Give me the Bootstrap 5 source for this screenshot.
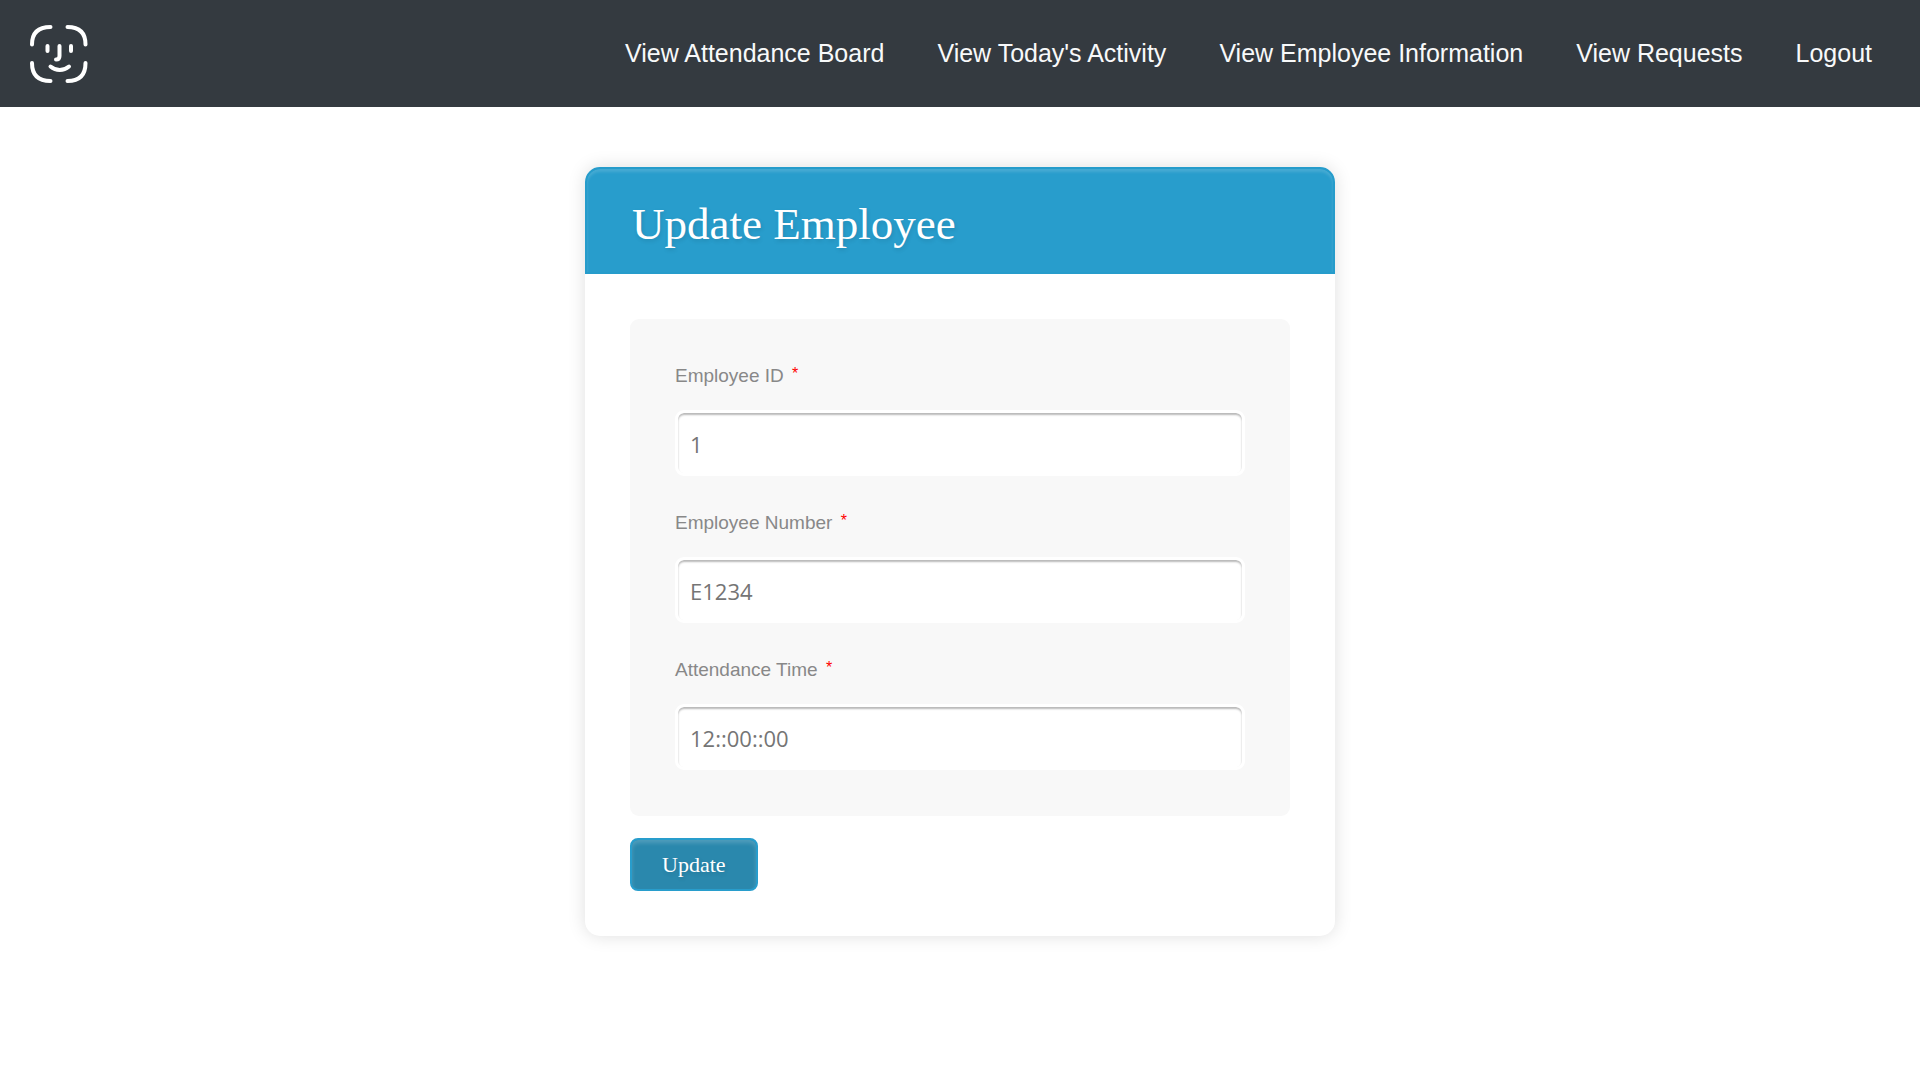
<!DOCTYPE html>
<html lang="en">
<head>
<meta charset="utf-8">
<meta name="viewport" content="width=device-width, initial-scale=1">
<title>Update Employee</title>
<link href="https://cdn.jsdelivr.net/npm/bootstrap@5.3.0/dist/css/bootstrap.min.css" rel="stylesheet">
<style>
  body { background: #fff; font-family: "Liberation Sans", Arial, sans-serif; }
  .site-bar { background: #343a40; padding: 24px; }
  .site-bar .navbar-brand { padding: 0; margin: 0 0 0 4px; }
  .site-bar .navbar-nav { column-gap: 53px; --bs-navbar-nav-link-padding-x: 0; }
  .site-bar .nav-link { color: #f8f9fa; font-size: 25px; line-height: 32px; padding: 0 0 2px; }
  .site-bar .nav-link:hover { color: #ccc; }
  .form-panel { max-width: 750px; margin: 60px auto; border-radius: 15px; box-shadow: 0 0 18px rgba(0, 0, 0, .13); }
  .panel-title {
    margin: 0; padding: 29px 45px 22px; color: #fff; background: #289dcc;
    border: 2px solid #269ccb; border-radius: 15px 15px 0 0;
    font: 400 45px/52px "Liberation Serif", "Times New Roman", serif;
    text-shadow: 1px 2px 4px rgba(0, 0, 0, .12);
    box-shadow: inset 0 3px 3px rgba(255, 255, 255, .14);
  }
  .panel-body { padding: 45px; }
  .field-group { background: #f8f8f8; border-radius: 9px; padding: 45px 45px 46px; margin-bottom: 22px; }
  .field-item + .field-item { margin-top: 35px; }
  .field-group .form-label { display: block; margin: 0 0 23px; color: #888; font-size: 19px; line-height: 23px; }
  .req-star { margin-left: 3px; color: #f00; font-size: 16px; line-height: 16px; vertical-align: 3px; }
  .field-group .form-control {
    height: 66px; padding: 2px 12px 0; border: 3px solid #fff; border-radius: 9px;
    box-shadow: inset 0 2px 2px rgba(0, 0, 0, .28);
    color: #757575; font: 400 22px/30px "Open Sans", "Noto Sans", sans-serif;
  }
  .field-group .form-control::placeholder { color: #757575; }
  .btn-update {
    padding: 10px 30px; color: #fff; background: #2a88ad; border: 2px solid #289dcc; border-radius: 8px;
    font: 400 22px/29px "Liberation Serif", "Times New Roman", serif;
    text-shadow: 1px 2px 4px rgba(0, 0, 0, .12);
    box-shadow: inset 0 3px 4px rgba(255, 255, 255, .18);
  }
  .btn-update:hover { color: #fff; background: #2a6881; }
</style>
<script defer src="https://cdn.jsdelivr.net/npm/bootstrap@5.3.0/dist/js/bootstrap.bundle.min.js"></script>
</head>
<body>
<nav class="navbar navbar-expand-lg site-bar">
  <a class="navbar-brand d-flex" href="#" aria-label="Home">
    <svg width="61" height="59" viewBox="0 0 61 59" fill="none" stroke="#fff" stroke-width="4" stroke-linecap="round" stroke-linejoin="round">
      <path d="M4 20.500C4 9 10 3 22.500 3M39.500 3C52 3 57.500 9 57.500 20.500M57.500 39C57.500 50.500 52 57 39.500 57M22.500 57C10 57 4 50.500 4 39"/>
      <path d="M19.500 22v5M43 22v5M31.500 22v10c0 2.500-1 3.500-3.500 3.500M22.500 42.500c5.500 4.600 13 4.600 18.500 0"/>
    </svg>
  </a>
  <div class="navbar-nav flex-wrap ms-auto pe-4">
    <a class="nav-link" href="#">View Attendance Board</a>
    <a class="nav-link" href="#">View Today's Activity</a>
    <a class="nav-link" href="#">View Employee Information</a>
    <a class="nav-link" href="#">View Requests</a>
    <a class="nav-link" href="#">Logout</a>
  </div>
</nav>
<main class="form-panel bg-white">
  <h1 class="panel-title">Update Employee</h1>
  <form class="panel-body">
    <div class="field-group d-flex flex-column">
      <div class="field-item">
        <label class="form-label" for="emp-id">Employee ID <span class="req-star">*</span></label>
        <input class="form-control" type="text" id="emp-id" placeholder="1">
      </div>
      <div class="field-item">
        <label class="form-label" for="emp-number">Employee Number <span class="req-star">*</span></label>
        <input class="form-control" type="text" id="emp-number" placeholder="E1234">
      </div>
      <div class="field-item">
        <label class="form-label" for="att-time">Attendance Time <span class="req-star">*</span></label>
        <input class="form-control" type="text" id="att-time" placeholder="12::00::00">
      </div>
    </div>
    <button class="btn btn-update" type="button">Update</button>
  </form>
</main>
</body>
</html>
